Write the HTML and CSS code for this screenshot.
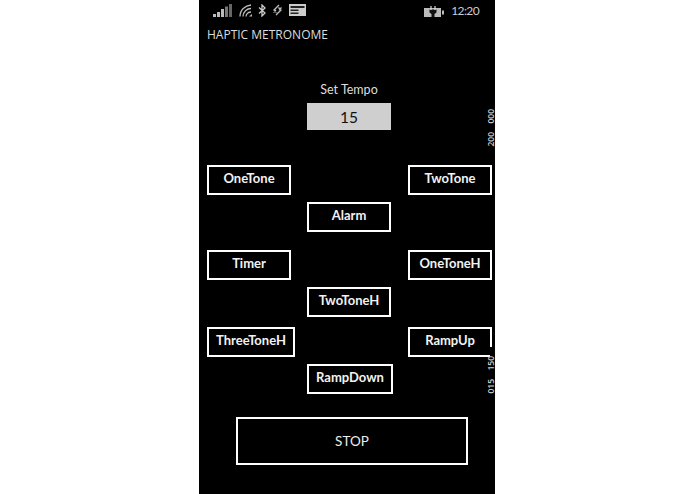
FILE: index.html
```html
<!DOCTYPE html>
<html lang="en">
<head>
<meta charset="utf-8">
<title>Haptic Metronome</title>
<link rel="stylesheet" href="styles.css">
</head>
<body>
<main class="phone">
  <header class="status">
    <div class="status-left">
      <svg class="ic-signal" width="20" height="13" viewBox="0 0 20 13"><rect x="0" y="10" width="3" height="3" fill="#bbb"/><rect x="4" y="8" width="3" height="5" fill="#bbb"/><rect x="8" y="5" width="3" height="8" fill="#bbb"/><rect x="12" y="2.500" width="3" height="10.500" fill="#777"/><rect x="16" y="0" width="3" height="13" fill="#666"/></svg>
      <svg class="ic-wifi" width="13" height="13" viewBox="0 0 13 13" fill="none" stroke="#bbb"><path d="M1 12.500C1 6 6 1.500 12 1" stroke-width="1.300"/><path d="M4 12.500C4 8 8 4.500 12 4.500" stroke-width="1.300"/><path d="M7 12.500C7 10 9.500 8 12 8" stroke-width="1.300"/><path d="M10 12.500h3v-2.500z" fill="#bbb" stroke="none"/></svg>
      <svg class="ic-bt" width="8" height="13" viewBox="0 0 8 13" fill="none" stroke="#ccc" stroke-width="1.300"><path d="M1 3.500L7 9 4 12V1l3 3L1 9.500"/></svg>
      <svg class="ic-rot" width="11" height="12" viewBox="0 0 11 12" fill="none" stroke="#bbb" stroke-width="1.400"><path d="M7 1L2 6l2.500 2.500M9.500 3.500L7 6M4 11l5-5-2.500-2.500M1.500 8.500L4 6"/></svg>
      <svg class="ic-msg" width="17" height="12" viewBox="0 0 17 12"><rect width="17" height="12" fill="#ccc"/><rect x="1.500" y="2" width="14" height="2" fill="#222"/><rect x="1.500" y="5.500" width="8" height="1.500" fill="#222"/><rect x="1.500" y="8.500" width="8" height="1.500" fill="#222"/></svg>
    </div>
    <div class="status-right">
      <svg class="ic-batt" width="20" height="11" viewBox="0 0 20 11"><rect x="0" y="2" width="17" height="9" fill="#bbb"/><rect x="18" y="4.500" width="2" height="4" fill="#bbb"/><path d="M5.500 3.500h7v3l-2 1.500v3h-3v-3l-2-1.500z" fill="#111"/><path d="M7 0v4M11 0v4" stroke="#ddd" stroke-width="1.200"/></svg>
      <span class="clock">12:20</span>
    </div>
  </header>
  <h1 class="app-title">HAPTIC METRONOME</h1>
  <section class="tempo">
    <label class="tempo-label">Set Tempo</label>
    <div class="tempo-value">15</div>
  </section>
  <section class="pads">
    <button class="pad r1 left">OneTone</button>
    <button class="pad r1 right">TwoTone</button>
    <button class="pad r2 mid">Alarm</button>
    <button class="pad r3 left">Timer</button>
    <button class="pad r3 right">OneToneH</button>
    <button class="pad r4 mid">TwoToneH</button>
    <button class="pad r5 left wide">ThreeToneH</button>
    <button class="pad r5 right clipped">RampUp</button>
    <button class="pad r6 mid wide-mid">RampDown</button>
  </section>
  <button class="stop">STOP</button>
  <span class="tick t1">000</span>
  <span class="tick t2">200</span>
  <span class="tick t3">150</span>
  <span class="tick t4">015</span>
</main>
</body>
</html>
```
FILE: styles.css
```css
html, body { margin: 0; padding: 0; background: #fff; }
body { height: 494px; overflow: hidden; padding-left: 199px; box-sizing: border-box; font-family: "Lato", "Open Sans", sans-serif; }
.phone { position: relative; width: 296px; height: 494px; background: #000; color: #fff; box-sizing: border-box; padding: 0 3px 0 8px; overflow: hidden; }
.status { display: flex; justify-content: space-between; height: 19px; align-items: flex-start; padding: 4px 13px 0 6px; box-sizing: border-box; }
.status-left { display: flex; align-items: flex-start; gap: 6px; }
.status-right { display: flex; align-items: center; gap: 7px; }
.clock { font-size: 12px; line-height: 14px; color: #ccc; letter-spacing: -0.600px; }
.app-title { margin: 7px 0 0; font-family: "Open Sans", sans-serif; font-size: 12px; line-height: 17px; font-weight: 400; color: #ddd; }
.tempo { display: flex; flex-direction: column; align-items: center; width: 84px; margin: 38px 0 0 100px; }
.tempo-label { font-size: 12.500px; line-height: 18px; color: #ddd; white-space: nowrap; }
.tempo-value { width: 84px; height: 27px; margin-top: 4px; background: #cfcfcf; color: #111; font-size: 15.500px; line-height: 28px; text-align: center; }
.pads { display: grid; grid-template-columns: 100px 101px 84px; row-gap: 7px; margin-top: 35px; align-items: start; }
.pad { box-sizing: border-box; width: 84px; height: 30px; border: 2px solid #fff; background: #000; color: #f2f2f2; font: 700 13px/22px "Lato", sans-serif; padding: 0 0 4px; white-space: nowrap; }
.left { grid-column: 1; }
.mid { grid-column: 2; }
.right { grid-column: 3; }
.r1 { grid-row: 1; }
.r2 { grid-row: 2; }
.r3 { grid-row: 3; margin-top: 11px; }
.r4 { grid-row: 4; }
.r5 { grid-row: 5; margin-top: 3px; }
.r6 { grid-row: 6; }
.wide { width: 88px; }
.wide-mid { width: 86px; }
.clipped { position: relative; }
.clipped::after { content: ""; position: absolute; right: -2px; bottom: -2px; width: 2px; height: 10px; background: #000; }
.stop { display: block; box-sizing: border-box; width: 232px; height: 48px; margin: 23px 0 0 29px; border: 2px solid #fff; background: #000; color: #eee; font: 400 13.500px/42px "Lato", sans-serif; padding: 0; }
.tick { position: absolute; right: 1px; width: 7px; font-size: 8.500px; font-weight: 600; line-height: 7px; color: #ccc; writing-mode: vertical-rl; transform: rotate(180deg); text-align: center; font-family: "Open Sans", sans-serif; }
.t1 { top: 109px; }
.t2 { top: 132px; }
.t3 { top: 356px; }
.t4 { top: 379px; }
```
